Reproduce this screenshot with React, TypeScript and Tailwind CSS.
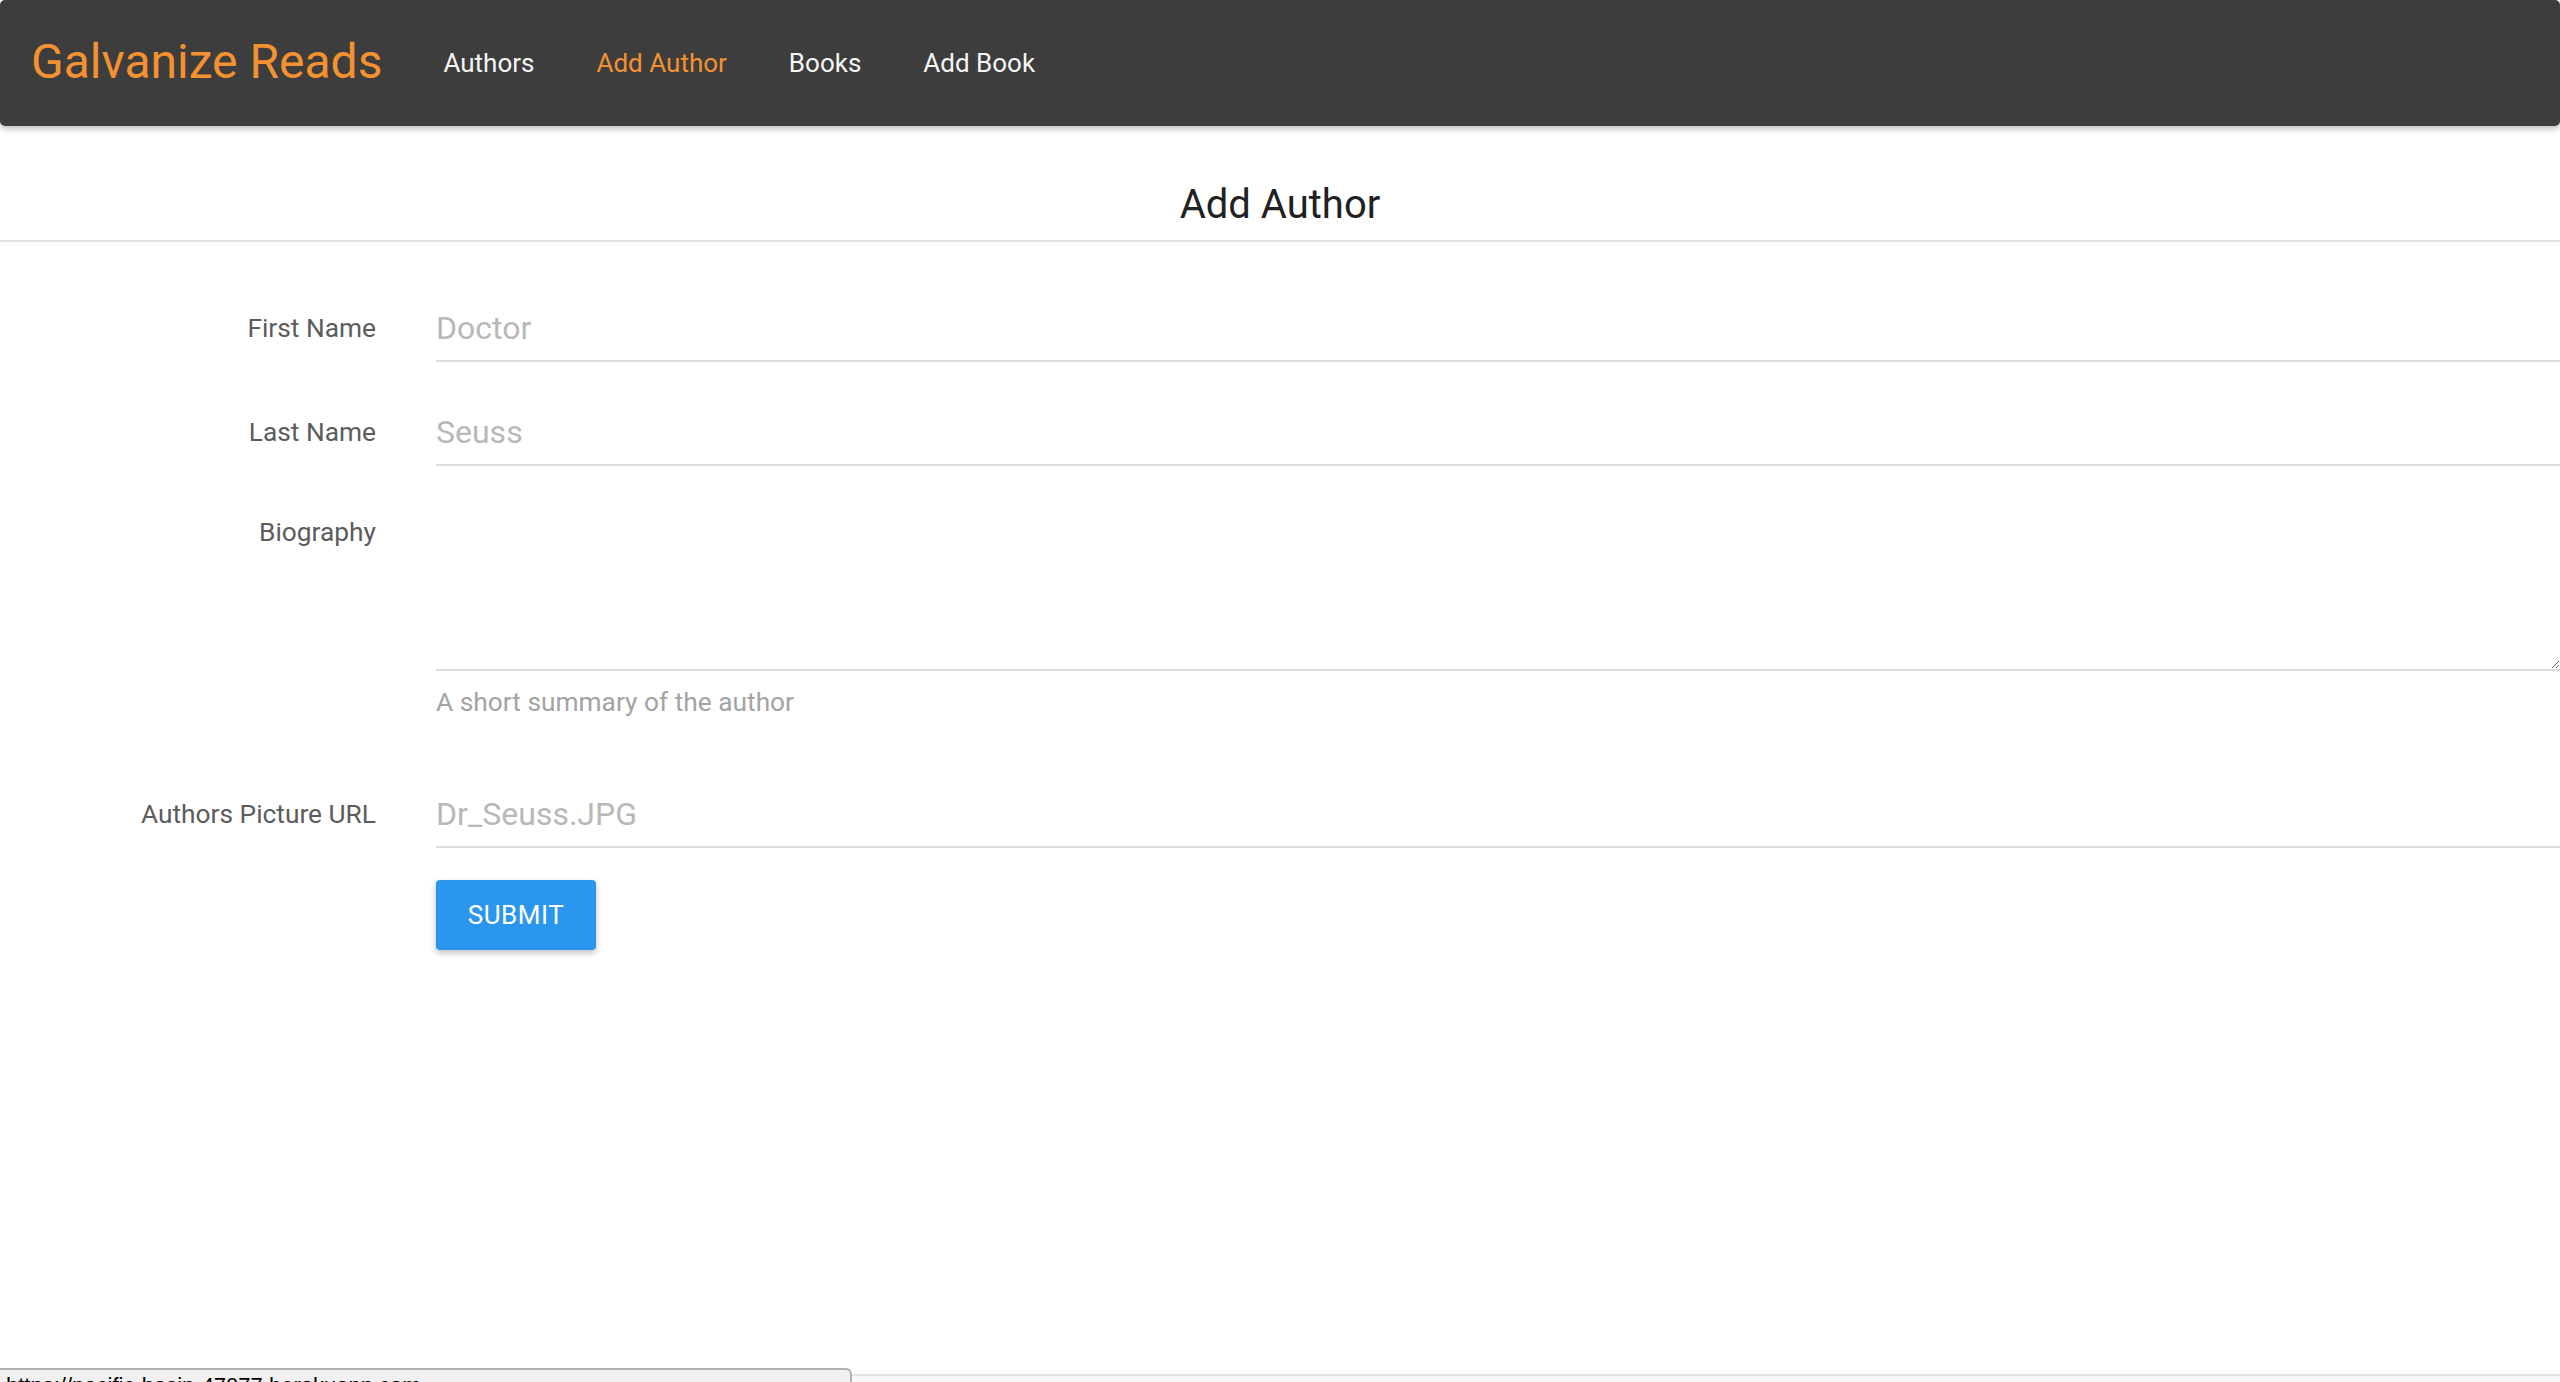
const navLinks = [
  { label: "Authors", active: false },
  { label: "Add Author", active: true },
  { label: "Books", active: false },
  { label: "Add Book", active: false },
]

const Navbar = () => {
  return (
    <nav className="h-[126px] bg-[#3d3d3d] rounded-[5px] shadow-[0_3px_6px_rgba(0,0,0,0.25)] flex items-center pl-[31px]">
      <a className="text-[48px] leading-none text-[#f49130] mr-[30px] pb-[2px]">Galvanize Reads</a>
      <ul className="flex items-center">
        {navLinks.map((link) => (
          <li key={link.label}>
            <a className={`block px-[31px] text-[26px] ${link.active ? "text-[#f49130]" : "text-[#f5f5f5]"}`}>
              {link.label}
            </a>
          </li>
        ))}
      </ul>
    </nav>
  )
}

interface FieldRowProps {
  label: string
  placeholder: string
  className?: string
}

const FieldRow = (props: FieldRowProps) => {
  return (
    <div className={`flex items-center ${props.className ?? ""}`}>
      <label className="w-[376px] shrink-0 text-right text-[26.3px] text-[#5c5c5c]">{props.label}</label>
      <input
        placeholder={props.placeholder}
        className="ml-[60px] flex-1 h-[66px] border-b-2 border-[#dcdcdc] text-[32px] text-[#333] placeholder:text-[#b8b8b8] outline-none bg-transparent"
      />
    </div>
  )
}

const App = () => {
  return (
    <div className="relative min-h-[1382px] bg-white overflow-hidden" style={{ fontFamily: "Roboto, 'Liberation Sans', sans-serif" }}>
      <Navbar />

      <div className="h-[116px] border-b-2 border-[#e3e3e3] flex items-center justify-center pt-[44px]">
        <h1 className="text-[40px] text-[#212121]">Add Author</h1>
      </div>

      <form className="pb-[200px]">
        <FieldRow label="First Name" placeholder="Doctor" className="mt-[54px]" />
        <FieldRow label="Last Name" placeholder="Seuss" className="mt-[38px]" />

        <div className="flex mt-[38px]">
          <label className="w-[376px] shrink-0 h-[58px] flex items-center justify-end text-[26.3px] text-[#5c5c5c]">Biography</label>
          <div className="ml-[60px] flex-1 flex flex-col">
            <textarea className="h-[167px] w-full border-b-2 border-[#dcdcdc] outline-none text-[32px]" />
            <span className="mt-[14px] h-[36px] flex items-center text-[26.3px] text-[#a3a3a3]">A short summary of the author</span>
          </div>
        </div>

        <FieldRow label="Authors Picture URL" placeholder="Dr_Seuss.JPG" className="mt-[61px]" />

        <div className="flex mt-[32px]">
          <div className="w-[376px] shrink-0" />
          <button
            type="button"
            className="ml-[60px] w-[160px] h-[70px] rounded-[4px] bg-[#2b96ed] text-white text-[26px] tracking-[0.5px] shadow-[0_3px_6px_rgba(0,0,0,0.25)]"
          >
            SUBMIT
          </button>
        </div>
      </form>

      <div className="absolute left-0 right-0 bottom-0 h-[8px] border-t-2 border-[#e3e3e3] bg-[#f8f8f8]" />
      <div className="absolute left-0 bottom-0 w-[852px] h-[14px] border-t-2 border-r-2 border-[#b0b0b0] rounded-tr-[6px] bg-[#f0f0f0] overflow-hidden">
        <div className="pl-[6px] pt-[3px] text-[22px] leading-[26px] text-black whitespace-nowrap" style={{ fontFamily: "'Liberation Sans', Arial, sans-serif" }}>
          https://pacific-basin-47077.herokuapp.com
        </div>
      </div>
    </div>
  )
}

export default App
